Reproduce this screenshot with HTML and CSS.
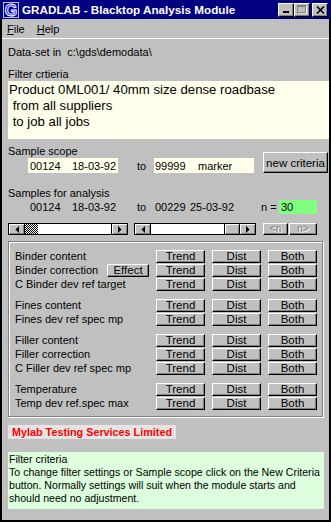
FILE: index.html
```html
<!DOCTYPE html>
<html lang="en">
<head>
  <meta charset="UTF-8" />
  <meta name="viewport" content="width=device-width, initial-scale=1.0"/>
  <title>GRADLAB - Blacktop Analysis Module</title>
  <link rel="stylesheet" href="styles.css">
</head>
<body>
  <div class="window">
    <div class="titlebar">
      <svg class="appicon" width="16" height="16" viewBox="0 0 16 16">
        <rect width="16" height="16" fill="#c0c0c0"/>
        <rect x="1" y="1" width="14" height="14" fill="#0000a8"/>
        <text x="8" y="14" text-anchor="middle" font-family="Liberation Sans, Arial, sans-serif" font-size="16" font-weight="bold" fill="#2828ff" stroke="#fff" stroke-width="0.9">G</text>
      </svg>
      <span class="title">GRADLAB - Blacktop Analysis Module</span>
      <div class="caption-btns">
        <span class="cbtn"><svg width="8" height="8" viewBox="0 0 8 8"><rect x="1" y="5" width="6" height="2" fill="#000"/></svg></span>
        <span class="cbtn"><svg width="10" height="9" viewBox="0 0 10 9"><rect x="0.5" y="0.5" width="8" height="7" fill="none" stroke="#808080"/><rect x="0.5" y="0.5" width="8" height="1.5" fill="#808080"/><path d="M9.5 1.5v7.5h-8" fill="none" stroke="#fff"/></svg></span>
        <span class="cbtn close"><svg width="9" height="8" viewBox="0 0 9 8"><path d="M1 0.5l7 7M8 0.5l-7 7" stroke="#000" stroke-width="1.6"/></svg></span>
      </div>
    </div>

    <div class="frame">
      <div class="menubar">
        <span class="menu"><u>F</u>ile</span>
        <span class="menu"><u>H</u>elp</span>
      </div>

      <div class="client">
        <div class="text-line">Data-set in&nbsp; c:\gds\demodata\</div>

        <div class="label filter-label">Filter crtieria</div>
        <div class="filterbox">
          <div class="fline">Product 0ML001/ 40mm size dense roadbase</div>
          <div class="fline"> from all suppliers</div>
          <div class="fline"> to job all jobs</div>
        </div>

        <div class="scope">
          <div class="label">Sample scope</div>
          <div class="data-row">
            <span class="cell c1 field"><span class="num n1">00124</span>18-03-92</span>
            <span class="to">to</span>
            <span class="cell c2 field"><span class="num n2">99999</span>marker</span>
          </div>
          <span class="btn newcrit">new criteria</span>
        </div>

        <div class="label samples-label">Samples for analysis</div>
        <div class="data-row samples">
          <span class="cell c1"><span class="num n1">00124</span>18-03-92</span>
          <span class="to">to</span>
          <span class="cell c3"><span class="num n3">00229</span>25-03-92</span>
          <span class="neq">n =</span>
          <span class="count">30</span>
        </div>

        <div class="scrollrow">
          <div class="sb sb1">
            <span class="arr"><svg width="4" height="7" viewBox="0 0 4 7"><path d="M4 0v7L0.5 3.5z" fill="#000"/></svg></span>
            <span class="thumb dither"></span>
            <span class="track"></span>
            <span class="arr arr-r"><svg width="4" height="7" viewBox="0 0 4 7"><path d="M0 0v7l3.5-3.5z" fill="#000"/></svg></span>
          </div>
          <div class="sb sb2">
            <span class="arr"><svg width="4" height="7" viewBox="0 0 4 7"><path d="M4 0v7L0.5 3.5z" fill="#000"/></svg></span>
            <span class="track"></span>
            <span class="thumb raised"></span>
            <span class="arr arr-r"><svg width="4" height="7" viewBox="0 0 4 7"><path d="M0 0v7l3.5-3.5z" fill="#000"/></svg></span>
          </div>
          <span class="btn nav nav-prev">&lt;n</span>
          <span class="btn nav nav-next">n&gt;</span>
        </div>

        <div class="group">
          <div class="sect">
            <div class="mrow"><span class="mlabel">Binder content</span><span></span><span class="btn">Trend</span><span class="btn">Dist</span><span class="btn">Both</span></div>
            <div class="mrow"><span class="mlabel">Binder correction</span><span class="btn">Effect</span><span class="btn">Trend</span><span class="btn">Dist</span><span class="btn">Both</span></div>
            <div class="mrow"><span class="mlabel">C Binder dev ref target</span><span></span><span class="btn">Trend</span><span class="btn">Dist</span><span class="btn">Both</span></div>
          </div>
          <div class="sect">
            <div class="mrow"><span class="mlabel">Fines content</span><span></span><span class="btn">Trend</span><span class="btn">Dist</span><span class="btn">Both</span></div>
            <div class="mrow"><span class="mlabel">Fines dev ref spec mp</span><span></span><span class="btn">Trend</span><span class="btn">Dist</span><span class="btn">Both</span></div>
          </div>
          <div class="sect">
            <div class="mrow"><span class="mlabel">Filler content</span><span></span><span class="btn">Trend</span><span class="btn">Dist</span><span class="btn">Both</span></div>
            <div class="mrow"><span class="mlabel">Filler correction</span><span></span><span class="btn">Trend</span><span class="btn">Dist</span><span class="btn">Both</span></div>
            <div class="mrow"><span class="mlabel">C Filler dev ref spec mp</span><span></span><span class="btn">Trend</span><span class="btn">Dist</span><span class="btn">Both</span></div>
          </div>
          <div class="sect">
            <div class="mrow"><span class="mlabel">Temperature</span><span></span><span class="btn">Trend</span><span class="btn">Dist</span><span class="btn">Both</span></div>
            <div class="mrow"><span class="mlabel">Temp dev ref.spec max</span><span></span><span class="btn">Trend</span><span class="btn">Dist</span><span class="btn">Both</span></div>
          </div>
        </div>

        <div class="brand">Mylab Testing Services Limited</div>

        <div class="help">
          <div>Filter criteria</div>
          <div>To change filter settings or Sample scope click on the New Criteria button. Normally settings will suit when the module starts and should need no adjustment.</div>
        </div>
      </div>
    </div>
  </div>
</body>
</html>
```

FILE: styles.css
```css
* {
  box-sizing: border-box;
}
body {
  margin: 0;
  background-color: #c0c0c0;
  color: #000;
  font-family: "Liberation Sans", Arial, sans-serif;
  font-size: 11px;
}
.window {
  width: 331px;
  height: 522px;
  display: flex;
  flex-direction: column;
  background-color: #c0c0c0;
}

/* title bar */
.titlebar {
  height: 19px;
  flex: none;
  display: flex;
  align-items: center;
  padding: 0 3px;
  background-color: #000080;
  color: #fff;
}
.appicon {
  flex: none;
  margin-right: 3px;
}
.title {
  font-size: 11.7px;
  font-weight: bold;
  white-space: nowrap;
}
.caption-btns {
  margin-left: auto;
  display: flex;
}
.cbtn {
  width: 16px;
  height: 14px;
  display: flex;
  align-items: center;
  justify-content: center;
  background-color: #c0c0c0;
  border: 1px solid;
  border-color: #fff #000 #000 #fff;
  box-shadow: inset -1px -1px 0 #808080;
}
.cbtn.close {
  margin-left: 2px;
}

/* frame below the caption */
.frame {
  flex: 1;
  display: flex;
  flex-direction: column;
  border: 2px solid #000;
  border-top: 0;
}
.menubar {
  height: 20px;
  flex: none;
  display: flex;
  align-items: center;
  gap: 12px;
  padding-left: 5px;
  border-bottom: 1px solid #fff;
}
.client {
  flex: 1;
  padding: 7px 0 0 6px;
}
.text-line,
.label {
  line-height: 13px;
  height: 13px;
  white-space: nowrap;
}
.filter-label {
  margin-top: 9px;
}
.filterbox {
  width: 321px;
  height: 58px;
  padding: 1px 0 0 1px;
  background-color: #ffffec;
  font-size: 13.2px;
  line-height: 16px;
}
.fline {
  white-space: pre;
}

/* sample scope */
.scope {
  margin-top: 6px;
  display: grid;
  grid-template-columns: 1fr 65px;
  grid-template-rows: 13px 15px;
  width: 320px;
}
.scope .label {
  grid-column: 1;
  grid-row: 1;
}
.scope .data-row {
  grid-column: 1;
  grid-row: 2;
}
.newcrit {
  grid-column: 2;
  grid-row: 1 / 3;
  align-self: end;
  height: 21px;
  font-size: 11.5px;
  border-width: 1px 2px 2px 1px;
}
.data-row {
  display: flex;
  align-items: center;
  height: 15px;
  padding-left: 20px;
  white-space: nowrap;
}
.cell {
  display: flex;
  align-items: center;
  height: 15px;
  padding-left: 2px;
}
.c1 {
  width: 90px;
}
.c2 {
  width: 100px;
  padding-left: 1px;
}
.c3 {
  width: 107px;
  padding-left: 1px;
}
.field {
  background-color: #ffffec;
}
.num {
  display: inline-block;
}
.n1 {
  width: 42px;
}
.n2 {
  width: 43px;
}
.n3 {
  width: 35px;
}
.to {
  width: 36px;
  padding-left: 19px;
}
.samples-label {
  margin-top: 14px;
}
.samples {
  height: 14px;
}
.neq {
  width: 18px;
}
.count {
  width: 38px;
  height: 14px;
  line-height: 14px;
  padding-left: 2px;
  background-color: #80ff80;
}

/* scrollbars */
.scrollrow {
  margin-top: 9px;
  display: flex;
  height: 12px;
}
.sb {
  display: flex;
  height: 12px;
  border: 1px solid #000;
}
.sb1 {
  width: 120px;
}
.sb2 {
  width: 122px;
  margin-left: 6px;
}
.arr {
  width: 16px;
  flex: none;
  display: flex;
  align-items: center;
  justify-content: center;
  background-color: #c0c0c0;
  border-right: 1px solid #000;
  box-shadow: inset 1px 1px 0 #fff, inset -1px -1px 0 #808080;
}
.arr-r {
  border-right: 0;
  border-left: 1px solid #000;
}
.track {
  flex: 1;
  background-color: #fff;
}
.thumb {
  width: 13px;
  flex: none;
}
.dither {
  background: repeating-conic-gradient(#000 0 25%, #fff 0 50%) 0 0 / 2px 2px;
}
.raised {
  width: 15px;
  background-color: #c0c0c0;
  border-left: 1px solid #000;
  box-shadow: inset 1px 1px 0 #fff, inset -1px -1px 0 #808080;
}
.nav {
  height: 12px;
  font-size: 10px;
  line-height: 10px;
  color: #808080;
  text-shadow: 1px 1px 0 #fff;
}
.nav-prev {
  width: 25px;
  margin-left: 7px;
}
.nav-next {
  width: 28px;
  margin-left: 1px;
}

/* buttons */
.btn {
  display: flex;
  align-items: center;
  justify-content: center;
  background-color: #c0c0c0;
  border: 1px solid;
  border-color: #fff #000 #000 #fff;
  box-shadow: inset -1px -1px 0 #808080;
  white-space: nowrap;
}

/* measure group */
.group {
  margin-top: 6px;
  width: 315px;
  padding: 8px 5px 5px 6px;
  border: 1px solid #808080;
  box-shadow: inset 1px 1px 0 #fff, 1px 1px 0 #fff;
}
.sect + .sect {
  margin-top: 7px;
}
.mrow {
  display: grid;
  grid-template-columns: 85px 42px 49px 49px 49px;
  column-gap: 7px;
  height: 14px;
  padding-bottom: 1px;
}
.mlabel {
  line-height: 13px;
  white-space: nowrap;
}
.mrow .btn {
  height: 13px;
  line-height: 11px;
  font-size: 11.5px;
}

/* footer */
.brand {
  margin-top: 8px;
  width: 168px;
  height: 14px;
  line-height: 14px;
  padding-left: 4px;
  background-color: #e4e4e4;
  color: #ff0000;
  font-weight: bold;
  font-size: 10.8px;
  white-space: nowrap;
}
.help {
  margin-top: 13px;
  width: 316px;
  height: 57px;
  padding: 1px 0 0 1px;
  background-color: #ddffdd;
  font-size: 10.6px;
  line-height: 13px;
}
```
